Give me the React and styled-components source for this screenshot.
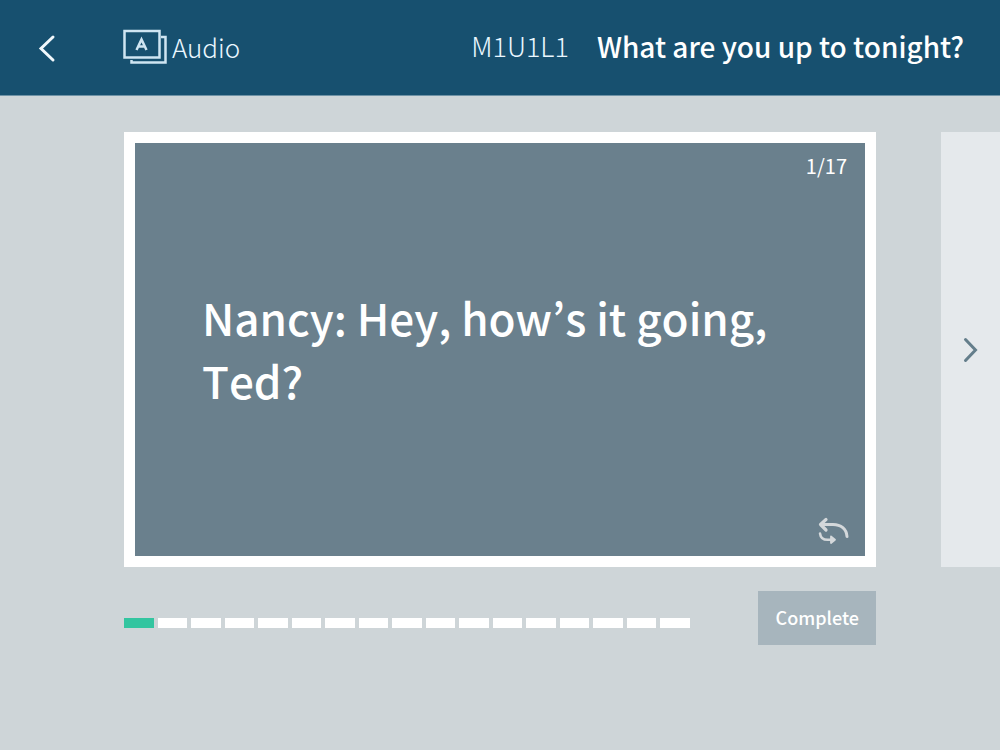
import React from "react";
import styled, { createGlobalStyle } from "styled-components";

const TOTAL = 17;
const CURRENT = 1;

const GlobalStyle = createGlobalStyle`
  * { box-sizing: border-box; }
  body {
    margin: 0;
    background: #ced5d8;
    color: #fff;
    font-family: "Noto Sans CJK KR", "Noto Sans", sans-serif;
  }
  button { font: inherit; color: inherit; border: 0; padding: 0; background: none; cursor: pointer; }
  svg { display: block; }
`;

const Header = styled.header`
  display: flex;
  align-items: center;
  height: 96px;
  padding: 0 36px 0 32px;
  background: #17506f;
  border-bottom: 1px solid #6f93a6;
`;

const BackButton = styled.button`
  width: 32px;
  height: 40px;
`;

const Mode = styled.div`
  display: flex;
  align-items: center;
  gap: 5px;
  margin-left: 59px;
  padding-bottom: 2px;
  font-size: 26px;
  font-weight: 300;
  line-height: 40px;
  color: #eaf7ff;
`;

const LessonCode = styled.span`
  margin-left: auto;
  padding-bottom: 3px;
  font-size: 27px;
  font-weight: 300;
  line-height: 40px;
  color: #eaf7ff;
`;

const Title = styled.h1`
  margin: 0 0 0 28px;
  padding-bottom: 3px;
  font-size: 28px;
  font-weight: 500;
  line-height: 40px;
  white-space: nowrap;
`;

const Main = styled.main`
  display: grid;
  grid-template-columns: minmax(0, 1fr) 59px;
  column-gap: 65px;
  row-gap: 24px;
  padding: 36px 0 36px 124px;
`;

const Card = styled.section`
  display: flex;
  flex-direction: column;
  min-height: 435px;
  border: 11px solid #fff;
  background: #6a808d;
`;

const Counter = styled.span`
  align-self: flex-end;
  padding: 8px 18px 0 0;
  font-size: 20px;
  font-weight: 400;
  line-height: 30px;
`;

const Sentence = styled.p`
  flex: 1;
  display: flex;
  align-items: center;
  margin: 0;
  padding: 0 67px;
  font-size: 44px;
  font-weight: 500;
  font-kerning: none;
  line-height: 63px;
`;

const FlipButton = styled.button`
  align-self: flex-end;
  width: 32px;
  height: 28px;
  margin: 0 15px 11px 0;
`;

const NextButton = styled.button`
  display: grid;
  place-items: center;
  && { background: #e5e9ec; }
`;

const Footer = styled.div`
  display: flex;
  align-items: center;
  gap: 68px;
`;

const Steps = styled.ol`
  flex: 1;
  display: flex;
  gap: 4px;
  margin: 0;
  padding: 10px 0 0;
  list-style: none;
`;

const Step = styled.li`
  flex: 1;
  height: 10px;
  background: ${(p) => (p.$done ? "#33c5a0" : "#fff")};
`;

const CompleteButton = styled.button`
  height: 54px;
  && {
    padding: 0 17px 2px 18px;
    background: #a7b5bd;
    font-size: 18px;
    font-weight: 500;
  }
`;

function Chevron({ left, color }) {
  return (
    <svg width="32" height="40" viewBox="0 0 32 40" fill="none" stroke={color} strokeWidth="3" strokeLinecap="round" strokeLinejoin="miter" aria-hidden="true">
      <path d={left ? "M21 9 9 20.500 21 32" : "M10.500 9.500 20.500 20 10.500 30.500"} />
    </svg>
  );
}

function CardsIcon() {
  return (
    <svg width="44" height="36" viewBox="0 0 44 36" fill="none" stroke="#cfe5f2" strokeWidth="2.500" aria-hidden="true">
      <rect x="1.500" y="2" width="35" height="26.500" />
      <path d="M38 8H42.500V33.500H8.500V31" />
      <path d="M13.500 21 18.500 10.500 23.500 21M15.500 17.500H21.500" />
    </svg>
  );
}

function FlipIcon() {
  return (
    <svg width="32" height="28" viewBox="0 0 32 28" fill="none" stroke="#d4d8db" strokeLinecap="round" strokeLinejoin="round" aria-hidden="true">
      <path d="M3.500 7.500H15C23 7.500 28.500 12 29 19.500" strokeWidth="3" />
      <path d="M8 2.500 2.500 7.500 8 13" strokeWidth="3.200" />
      <path d="M2 16.500C2.500 20.500 5.500 22.800 9.500 22.800H14" strokeWidth="2.500" />
      <path d="M13 19.500 17 22.800 13 26Z" strokeWidth="1.800" fill="#d4d8db" />
    </svg>
  );
}

export default function App() {
  return (
    <>
      <GlobalStyle />
      <Header>
        <BackButton type="button" aria-label="Back"><Chevron left color="#f1f8fc" /></BackButton>
        <Mode><CardsIcon />Audio</Mode>
        <LessonCode>M1U1L1</LessonCode>
        <Title>What are you up to tonight?</Title>
      </Header>
      <Main>
        <Card>
          <Counter>{CURRENT}/{TOTAL}</Counter>
          <Sentence>Nancy: Hey, how’s it going, Ted?</Sentence>
          <FlipButton type="button" aria-label="Flip card"><FlipIcon /></FlipButton>
        </Card>
        <NextButton type="button" aria-label="Next card"><Chevron color="#647e8b" /></NextButton>
        <Footer>
          <Steps aria-label="Progress">
            {Array.from({ length: TOTAL }, (_, i) => <Step key={i} $done={i < CURRENT} />)}
          </Steps>
          <CompleteButton type="button">Complete</CompleteButton>
        </Footer>
      </Main>
    </>
  );
}
